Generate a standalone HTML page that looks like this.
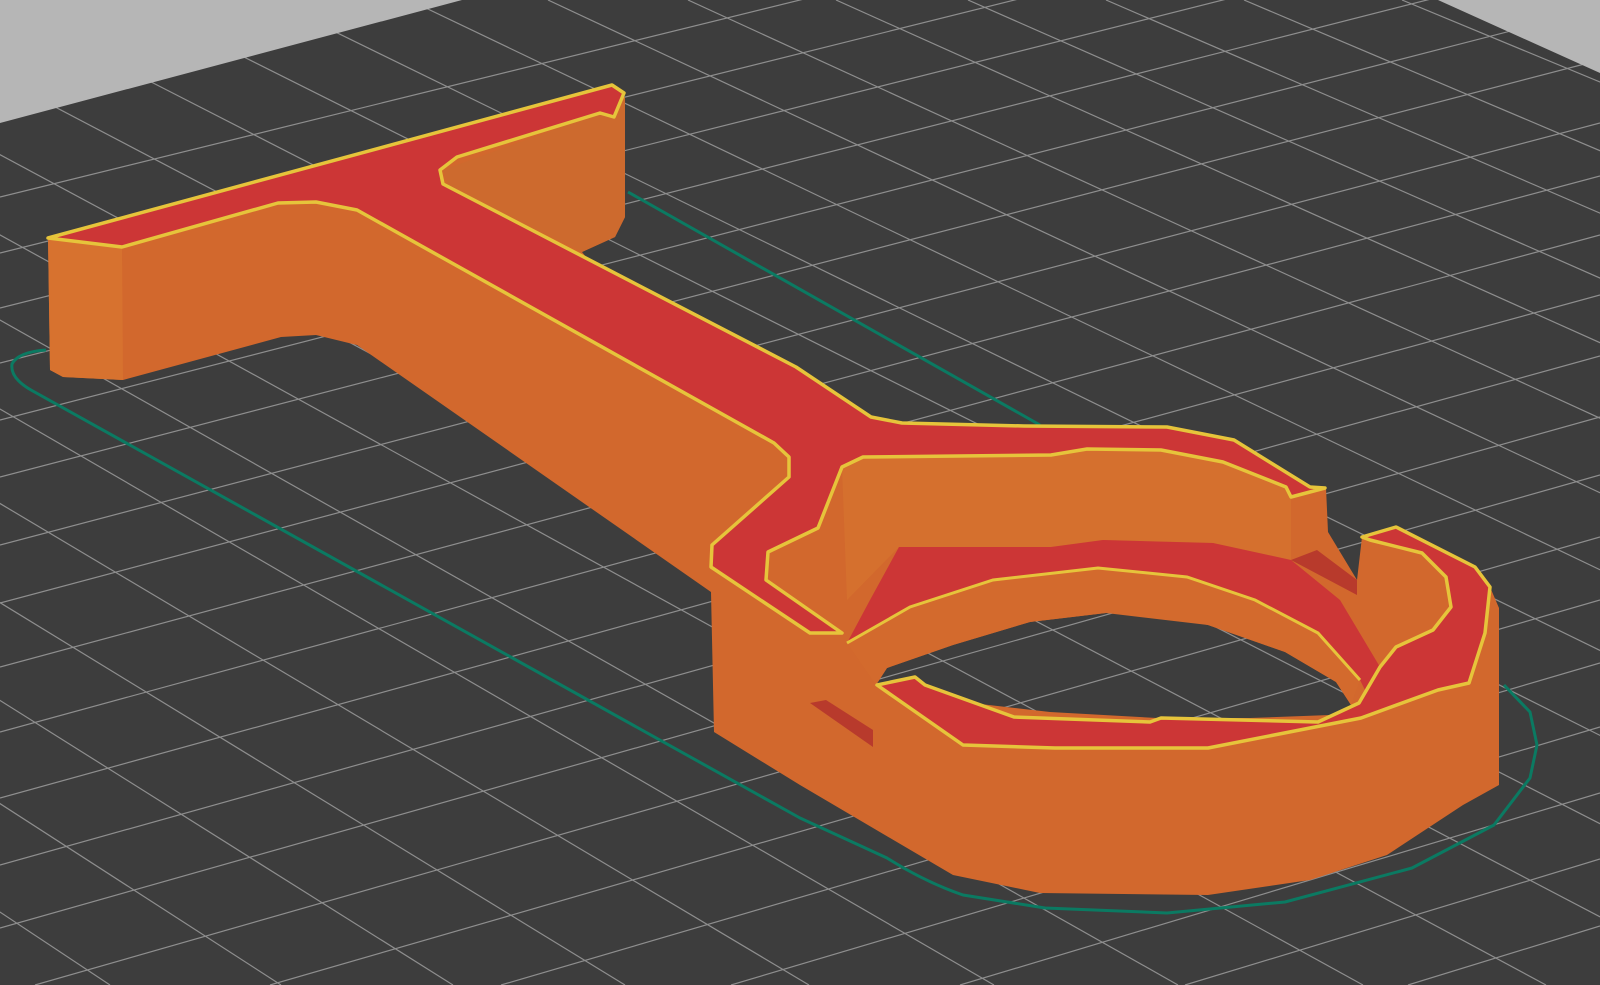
<!DOCTYPE html>
<html><head><meta charset="utf-8"><style>html,body{margin:0;padding:0;background:#3d3d3d;width:1600px;height:985px;overflow:hidden}svg{display:block}</style></head>
<body>
<svg width="1600" height="985" viewBox="0 0 1600 985" xmlns="http://www.w3.org/2000/svg">
<rect width="1600" height="985" fill="#3d3d3d"/>
<g stroke="#8e8e8e" stroke-width="1.2" fill="none">
<line x1="-1505" y1="0" x2="-62" y2="985"/><line x1="-1375" y1="0" x2="110" y2="985"/><line x1="-1245" y1="0" x2="281" y2="985"/><line x1="-1115" y1="0" x2="453" y2="985"/><line x1="-985" y1="0" x2="625" y2="985"/><line x1="-846" y1="0" x2="809" y2="985"/><line x1="-706" y1="0" x2="994" y2="985"/><line x1="-567" y1="0" x2="1178" y2="985"/><line x1="-427" y1="0" x2="1363" y2="985"/><line x1="-288" y1="0" x2="1546" y2="985"/><line x1="-149" y1="0" x2="1730" y2="985"/><line x1="-9" y1="0" x2="1915" y2="985"/><line x1="130" y1="0" x2="2099" y2="985"/><line x1="270" y1="0" x2="2284" y2="985"/><line x1="409" y1="0" x2="2468" y2="985"/><line x1="548" y1="0" x2="2651" y2="985"/><line x1="688" y1="0" x2="2836" y2="985"/><line x1="836" y1="0" x2="3032" y2="985"/><line x1="968" y1="0" x2="3207" y2="985"/><line x1="1106" y1="0" x2="3389" y2="985"/><line x1="1244" y1="0" x2="3571" y2="985"/><line x1="1402" y1="0" x2="3780" y2="985"/>
<line x1="0" y1="197" x2="1600" y2="-197"/><line x1="0" y1="253" x2="1600" y2="-146"/><line x1="0" y1="308" x2="1600" y2="-95"/><line x1="0" y1="363" x2="1600" y2="-44"/><line x1="0" y1="420" x2="1600" y2="8"/><line x1="0" y1="477" x2="1600" y2="60"/><line x1="0" y1="545" x2="1600" y2="123"/><line x1="0" y1="603" x2="1600" y2="176"/><line x1="0" y1="667" x2="1600" y2="235"/><line x1="0" y1="732" x2="1600" y2="295"/><line x1="0" y1="798" x2="1600" y2="356"/><line x1="0" y1="865" x2="1600" y2="417"/><line x1="0" y1="928" x2="1600" y2="475"/><line x1="35" y1="985" x2="1600" y2="537"/><line x1="270" y1="985" x2="1600" y2="600"/><line x1="501" y1="985" x2="1600" y2="663"/><line x1="731" y1="985" x2="1600" y2="727"/><line x1="960" y1="985" x2="1600" y2="793"/><line x1="1185" y1="985" x2="1600" y2="859"/><line x1="1408" y1="985" x2="1600" y2="926"/>
</g>
<polygon points="0,0 462,0 0,123" fill="#b6b6b6"/>
<polygon points="1438,0 1600,0 1600,73" fill="#b6b6b6"/>
<g fill="none" stroke="#0b7a62" stroke-width="3" stroke-linejoin="round">
<path d="M628,192 L1040,425"/>
<path d="M46,350 Q18,352 12,364 Q10,378 31,390 L800,818 L887,858 Q925,882 963,895 L1045,908 L1167,913 L1285,902 L1412,868 L1494,825 L1530,778 L1537,745 L1530,712 L1504,685"/>
</g>
<path fill-rule="evenodd" fill="#d2682d" d="M48,238 L612,85 L624,92 L625,217 L615,237 L582,252 L590,262 L796,367 L871,417 L902,423 L1024,426 L1167,427 L1234,440 L1310,487 L1326,488 L1328,532 L1357,580 L1362,537 L1396,527 L1475,567 L1490,587 L1499,608 L1499,785 L1463,805 L1387,855 L1310,880 L1208,895 L1040,893 L953,875 L800,785 L714,732 L711,592 L357,345 L316,335 L281,337 L123,380 L63,377 L50,370 Z
M876,685 L887,668 L953,645 L1030,622 L1106,613 L1160,615 L1208,625 L1285,652 L1336,682 L1351,705 L1330,715 L1250,718 L1157,718 L1050,712 L963,702 L917,688 Z"/>
<polygon points="48,238 122,247 123,380 63,377 50,370" fill="#d7722f"/>
<polygon points="443,170 600,113 625,97 625,217 615,237 582,252 449,188" fill="#cd6a2e"/>
<polygon points="842,467 863,457 1051,455 1087,449 1161,450 1223,462 1286,487 1291,497 1291,560 1213,543 1103,540 1051,547 899,547 847,600" fill="#d5702e"/>
<polygon points="847,643 870,600 899,547 1051,547 1103,540 1213,543 1291,560 1340,600 1380,667 1370,700 1360,680 1318,633 1255,600 1187,577 1098,568 993,580 910,607" fill="#cc3636"/>
<polygon points="847,643 910,607 993,580 1098,568 1187,577 1255,600 1318,633 1360,680 1351,705 1336,682 1285,652 1208,625 1106,613 1030,622 953,645 887,668 876,685" fill="#d36a2d"/>
<polyline points="847,643 910,607 993,580 1098,568 1187,577 1255,600 1318,633 1360,680" fill="none" stroke="#e6c43b" stroke-width="3"/>
<polygon points="1291,560 1317,550 1357,580 1357,595" fill="#b83a2c"/>
<polygon points="810,703 826,700 873,730 873,747" fill="#b83a2c"/>
<polygon points="48,238 612,85 624,93 614,117 600,113 457,157 440,170 443,184 796,367 871,417 902,423 1024,426 1167,427 1234,440 1310,487 1325,488 1291,497 1286,487 1223,462 1161,450 1087,449 1051,455 863,457 842,467 829,500 818,528 768,552 766,580 842,633 810,633 711,567 712,545 789,477 789,457 774,443 357,210 316,202 278,203 122,247" fill="#cc3636" stroke="#e6c43b" stroke-width="3.5" stroke-linejoin="round"/>
<polygon points="877,685 915,677 925,685 1014,717 1150,722 1161,718 1318,722 1359,703 1380,667 1396,647 1433,630 1451,607 1446,577 1422,553 1370,540 1362,537 1396,527 1475,567 1490,587 1485,633 1469,683 1438,690 1361,718 1208,748 1055,748 963,745" fill="#cc3636" stroke="#e6c43b" stroke-width="3.5" stroke-linejoin="round"/>
</svg>
</body></html>
